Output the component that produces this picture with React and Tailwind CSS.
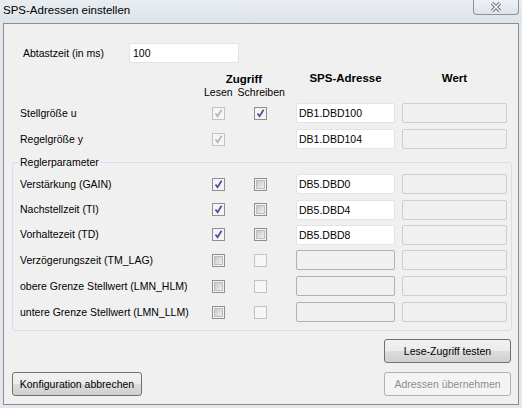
import React from 'react';

const rows = [
  { label: 'Stellgröße u', read: 'dis-on', write: 'on', addr: 'DB1.DBD100', h: 'h-[26px]' },
  { label: 'Regelgröße y', read: 'dis-on', write: null, addr: 'DB1.DBD104', h: 'h-[26px]' },
];

const params = [
  { label: 'Verstärkung (GAIN)', read: 'on', write: 'off', addr: 'DB5.DBD0', h: 'h-[26px]' },
  { label: 'Nachstellzeit (TI)', read: 'on', write: 'off', addr: 'DB5.DBD4', h: 'h-[25px]' },
  { label: 'Vorhaltezeit (TD)', read: 'on', write: 'off', addr: 'DB5.DBD8', h: 'h-[25px]' },
  { label: 'Verzögerungszeit (TM_LAG)', read: 'off', write: 'dis-off', addr: null, h: 'h-[26px]' },
  { label: 'obere Grenze Stellwert (LMN_HLM)', read: 'off', write: 'dis-off', addr: null, h: 'h-[26px]' },
  { label: 'untere Grenze Stellwert (LMN_LLM)', read: 'off', write: 'dis-off', addr: null, h: 'h-[26px]' },
];

function Checkbox({ state }) {
  if (!state) return null;
  const disabled = state.startsWith('dis');
  const checked = state.endsWith('on');
  return (
    <div
      className={
        'w-[13px] h-[13px] border flex items-center justify-center ' +
        (disabled ? 'border-[#c2c2c2] bg-[#f6f6f6]' : 'border-[#8e8f8f] bg-[#f4f4f4]')
      }
    >
      {checked ? (
        <svg width="11" height="11" viewBox="0 0 11 11">
          <path
            d="M2.5 5.5 L4.6 8.3 L8.6 1.8"
            fill="none"
            stroke={disabled ? '#b4b4b4' : '#4a4c9c'}
            strokeWidth="1.7"
          />
        </svg>
      ) : disabled ? null : (
        <div className="w-[9px] h-[9px] border border-[#b9bcc0] bg-[linear-gradient(135deg,#c9c9c9,#eeeeee)]" />
      )}
    </div>
  );
}

function Field({ value, width, enabled, light }) {
  return (
    <input
      readOnly
      value={value || ''}
      className={
        'h-[20px] px-[2px] outline-none rounded-[2px] text-[10.5px] text-black border ' +
        width + ' ' +
        (enabled
          ? 'bg-white border-[#e3e3e3]'
          : light
          ? 'bg-[#f0f0f0] border-[#cdcdcd]'
          : 'bg-[#f0f0f0] border-[#aeb2b5]')
      }
    />
  );
}

function Row({ r }) {
  return (
    <div className={'flex items-center ' + r.h}>
      <div className="w-[177px]">{r.label}</div>
      <div className="w-[42px] flex justify-center">
        <Checkbox state={r.read} />
      </div>
      <div className="w-[42px] flex justify-center">
        <Checkbox state={r.write} />
      </div>
      <div className="w-[15px]" />
      <Field value={r.addr} width="w-[99px]" enabled={!!r.addr} />
      <div className="w-[7px]" />
      <Field width="w-[105px]" light />
    </div>
  );
}

function Button({ children, disabled, className }) {
  return (
    <button
      className={
        'h-[24px] rounded-[3px] border text-[10.5px] ' +
        (disabled
          ? 'border-[#adb2b5] bg-[#f4f4f4] text-[#8d8d8d]'
          : 'border-[#707070] text-black bg-[linear-gradient(to_bottom,#f2f2f2_0%,#ebebeb_50%,#dddddd_51%,#cfcfcf_100%)]') +
        ' ' + className
      }
    >
      {children}
    </button>
  );
}

export default function App() {
  return (
    <div className="w-[522px] h-[408px] bg-[#e3e8ee] flex flex-col font-['Liberation_Sans',Arial,sans-serif] text-black overflow-hidden">
      {/* title bar */}
      <div className="h-[23px] flex items-start px-[3px] bg-[linear-gradient(to_bottom,#e9edf2,#dde3ea)]">
        <div className="pt-[3px] text-[11.5px] leading-[14px]">SPS-Adressen einstellen</div>
        <div className="ml-auto w-[46px] h-[15px] border border-t-0 border-[#8d939b] rounded-b-[4px] bg-[linear-gradient(to_bottom,#eef1f5,#dfe4ea)] flex justify-center pt-[2px]">
          <svg width="12" height="10" viewBox="0 0 12 10">
            <path d="M2 1 L10 9 M10 1 L2 9" stroke="#5f6670" strokeWidth="3.2" />
            <path d="M2 1 L10 9 M10 1 L2 9" stroke="#f4f6f8" strokeWidth="1.6" />
          </svg>
        </div>
      </div>

      {/* client area */}
      <div className="mx-[3px] h-[382px] border border-[#8c8c8c] bg-[#f0f0f0] flex flex-col text-[10.5px] leading-[13px]">
        <div className="flex items-center mt-[19px] pl-[19px]">
          <div className="w-[106px]">Abtastzeit (in ms)</div>
          <input
            readOnly
            value="100"
            className="w-[110px] h-[20px] px-[3px] outline-none bg-white border border-[#e3e3e3] rounded-[2px] text-[10.5px]"
          />
        </div>

        {/* column headers */}
        <div className="flex items-start mt-[10px] pl-[16px] h-[27px]">
          <div className="w-[184px]" />
          <div className="w-[80px] flex flex-col">
            <div className="text-center font-bold text-[11.5px]">Zugriff</div>
            <div className="flex gap-[5px]">
              <span>Lesen</span>
              <span>Schreiben</span>
            </div>
          </div>
          <div className="w-[12px]" />
          <div className="w-[99px] text-center font-bold text-[11.5px] -mt-px">SPS-Adresse</div>
          <div className="w-[7px]" />
          <div className="w-[105px] text-center font-bold text-[11.5px] -mt-px">Wert</div>
        </div>

        <div className="pl-[16px]">
          {rows.map((r) => (
            <Row key={r.label} r={r} />
          ))}
        </div>

        <fieldset className="mt-[4px] ml-[8px] mr-[6px] border border-[#d5dfe5] rounded-[3px] pl-[7px] pt-[2px] pb-[5px]">
          <legend className="px-px -ml-px leading-[13px]">Reglerparameter</legend>
          {params.map((r) => (
            <Row key={r.label} r={r} />
          ))}
        </fieldset>

        <div className="flex items-end justify-between pl-[8px] pr-[7px] mt-[8px]">
          <Button className="w-[130px]">Konfiguration abbrechen</Button>
          <div className="flex flex-col gap-[9px]">
            <Button className="w-[127px]">Lese-Zugriff testen</Button>
            <Button className="w-[127px]" disabled>
              Adressen übernehmen
            </Button>
          </div>
        </div>
      </div>
    </div>
  );
}
